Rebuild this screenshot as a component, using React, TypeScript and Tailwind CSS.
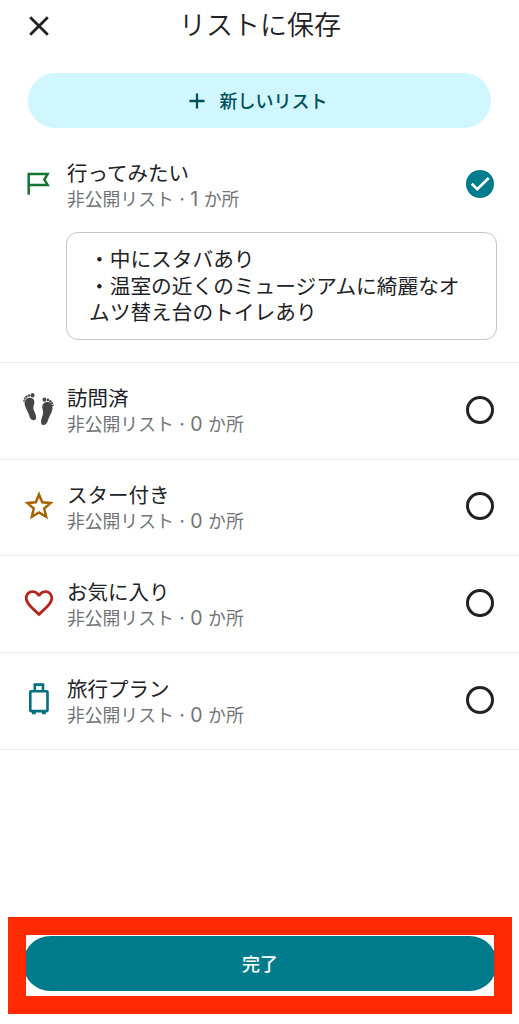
import React, { useState } from "react";

interface SavedList {
    id: string;
    name: string;
    count: number;
    icon: React.ReactNode;
    note?: string;
}

function FlagIcon() {
    return (
        <svg width="24" height="24" viewBox="0 0 24 24" fill="none" stroke="#137333" strokeWidth="2.5">
            <path d="M1.7 22.8V2H20.6L17.4 7.6L20.6 12.9H1.7" />
        </svg>
    );
}

function FootprintsIcon() {
    return (
        <svg width="31" height="34" viewBox="0 0 31 34" fill="#444648">
            <path d="M6.3 4.7C9.8 4.2 11.8 6.7 11.3 10C11 12.2 10.1 13.4 10.4 15.6C10.8 18.4 13.2 21.4 13.2 24.2C13.2 26.4 11.9 27.5 10.2 27.2C8 26.9 6.9 24.8 6.2 22.4C5.2 18.8 2.6 15.5 1.8 12C1 8.4 2.8 5.2 6.3 4.7Z" />
            <ellipse cx="9.6" cy="2.3" rx="1.9" ry="2.2" />
            <circle cx="6.1" cy="2.5" r="1.3" />
            <circle cx="3.5" cy="3.7" r="1.2" />
            <circle cx="1.8" cy="5.6" r="1.1" />
            <circle cx="1" cy="7.8" r=".9" />
            <path d="M25 9.1C21.5 8.6 19.2 10.9 19.3 14.2C19.3 16.4 20.4 18 20.1 20.3C19.7 23.2 18 26 18 29C18 31.2 19.1 32.3 20.8 32C23.1 31.7 24.3 29.6 25 27.2C26 23.6 28.7 20.2 29.4 16.6C30.1 12.8 28.5 9.6 25 9.1Z" />
            <ellipse cx="21.4" cy="6.6" rx="1.9" ry="2.2" />
            <circle cx="24.9" cy="6.9" r="1.3" />
            <circle cx="27.4" cy="8.2" r="1.2" />
            <circle cx="29.1" cy="10.1" r="1.1" />
            <circle cx="29.9" cy="12.3" r=".9" />
        </svg>
    );
}

function StarIcon() {
    return (
        <svg width="32" height="32" viewBox="0 0 30 30" fill="none" stroke="#a56300" strokeWidth="2.3">
            <path d="M15 4.2L18 11.5L25.9 12.2L19.9 17.4L21.7 25.1L15 21L8.3 25.1L10.1 17.4L4.1 12.2L12 11.5Z" />
        </svg>
    );
}

function HeartIcon() {
    return (
        <svg width="34" height="34" viewBox="0 0 24 24" fill="#b3261e">
            <path d="M16.5 3c-1.74 0-3.41.81-4.5 2.09C10.91 3.81 9.24 3 7.5 3 4.42 3 2 5.42 2 8.5c0 3.78 3.4 6.86 8.55 11.54L12 21.35l1.45-1.32C18.6 15.36 22 12.28 22 8.5 22 5.42 19.58 3 16.5 3zm-4.4 15.55l-.1.1-.1-.1C7.14 14.24 4 11.39 4 8.5 4 6.5 5.5 5 7.5 5c1.54 0 3.04.99 3.57 2.36h1.87C13.46 5.99 14.96 5 16.5 5c2 0 3.5 1.5 3.5 3.5 0 2.89-3.14 5.74-7.9 10.05z" />
        </svg>
    );
}

function LuggageIcon() {
    return (
        <svg width="22" height="34" viewBox="0 0 22 34" fill="none" stroke="#00707f" strokeWidth="2.6">
            <rect x="2.3" y="8.3" width="17.2" height="19.8" rx="0.8" />
            <path d="M6.8 8V1.6H15V8" />
            <path d="M4 30H7.8M14 30H17.8" />
        </svg>
    );
}

const lists: SavedList[] = [
    {
        id: "want-to-go",
        name: "行ってみたい",
        count: 1,
        icon: <FlagIcon />,
        note: "・中にスタバあり\n・温室の近くのミュージアムに綺麗なオムツ替え台のトイレあり",
    },
    { id: "visited", name: "訪問済", count: 0, icon: <FootprintsIcon /> },
    { id: "starred", name: "スター付き", count: 0, icon: <StarIcon /> },
    { id: "favorites", name: "お気に入り", count: 0, icon: <HeartIcon /> },
    { id: "travel", name: "旅行プラン", count: 0, icon: <LuggageIcon /> },
];

function Check({ checked }: { checked: boolean }) {
    if (!checked) {
        return <span className="block size-7 rounded-full border-3 border-[#202124]" />;
    }
    return (
        <span className="flex size-7 items-center justify-center rounded-full bg-[#007b8b]">
            <svg width="20" height="20" viewBox="0 0 20 20" fill="none" stroke="white" strokeWidth="2.7">
                <path d="M1.7 9.7L7.3 15.2L18.7 4" />
            </svg>
        </span>
    );
}

export default function App() {
    const [selected, setSelected] = useState<string[]>(["want-to-go"]);

    const toggle = (id: string) =>
        setSelected((prev) => (prev.includes(id) ? prev.filter((s) => s !== id) : [...prev, id]));

    return (
        <div className="flex h-[1024px] w-[519px] flex-col overflow-hidden bg-white font-['Inter','Noto_Sans_CJK_JP',sans-serif] text-[#202124]">
            {/* Header */}
            <header className="grid h-[52px] shrink-0 grid-cols-[78px_1fr_77px] items-center">
                <button aria-label="閉じる" className="flex justify-center">
                    <svg width="20" height="20" viewBox="0 0 20 20" fill="none" stroke="#202124" strokeWidth="2.8">
                        <path d="M1.2 1.2L18.8 18.8M18.8 1.2L1.2 18.8" />
                    </svg>
                </button>
                <h1 className="text-center text-[27px] leading-[50px] font-[350]">リストに保存</h1>
            </header>

            <button className="mx-7 mt-[21px] flex h-[55px] shrink-0 items-center justify-center gap-[15px] rounded-full bg-[#d0f7ff] pr-[3px] text-[#004f5a]">
                <svg width="16" height="16" viewBox="0 0 16 16" fill="none" stroke="currentColor" strokeWidth="2.3">
                    <path d="M8 .5V15.5M.5 8H15.5" />
                </svg>
                <span className="pt-[2px] text-[18px] leading-6 font-medium">新しいリスト</span>
            </button>

            {/* Lists */}
            <ul className="mt-2">
                {lists.map((list) => (
                    <li key={list.id} className="border-b border-[#ebebeb]">
                        <button
                            onClick={() => toggle(list.id)}
                            className={`flex h-[95.8px] w-full items-center pr-[25px] text-left ${list.note ? "" : "pb-[2px]"}`}
                        >
                            <span className="flex w-[67px] shrink-0 justify-center pr-2.5 pl-5">
                                <span className="flex shrink-0 justify-center">{list.icon}</span>
                            </span>
                            <span className={`flex-1 ${list.note ? "pt-[6px]" : "pt-1"}`}>
                                <span className="block text-[20.5px] leading-[26px]">{list.name}</span>
                                <span className="block text-[17.8px] leading-[25px] text-[#707376]">
                                    非公開リスト<span className="text-[19.5px] leading-none"> · {list.count} </span>か所
                                </span>
                            </span>
                            <Check checked={selected.includes(list.id)} />
                        </button>
                        {list.note && (
                            <div className="mr-[22px] mb-[22px] ml-[66px] h-[108px] rounded-xl border-[1.5px] border-[#c6c6c6] pt-[14px] pr-[20px] pl-[22px] text-[20.7px] leading-[26.8px] whitespace-pre-wrap">
                                {list.note}
                            </div>
                        )}
                    </li>
                ))}
            </ul>

            {/* Highlighted confirm button */}
            <footer className="mr-[7px] mb-2.5 ml-2 mt-auto flex h-[97px] shrink-0 justify-center overflow-hidden border-[18px] border-[#ff2a00]">
                <button className="mt-[1px] h-[55px] w-[474px] shrink-0 rounded-full bg-[#007b8b] pt-[2px] text-[18px] font-medium text-white">
                    完了
                </button>
            </footer>
        </div>
    );
}
